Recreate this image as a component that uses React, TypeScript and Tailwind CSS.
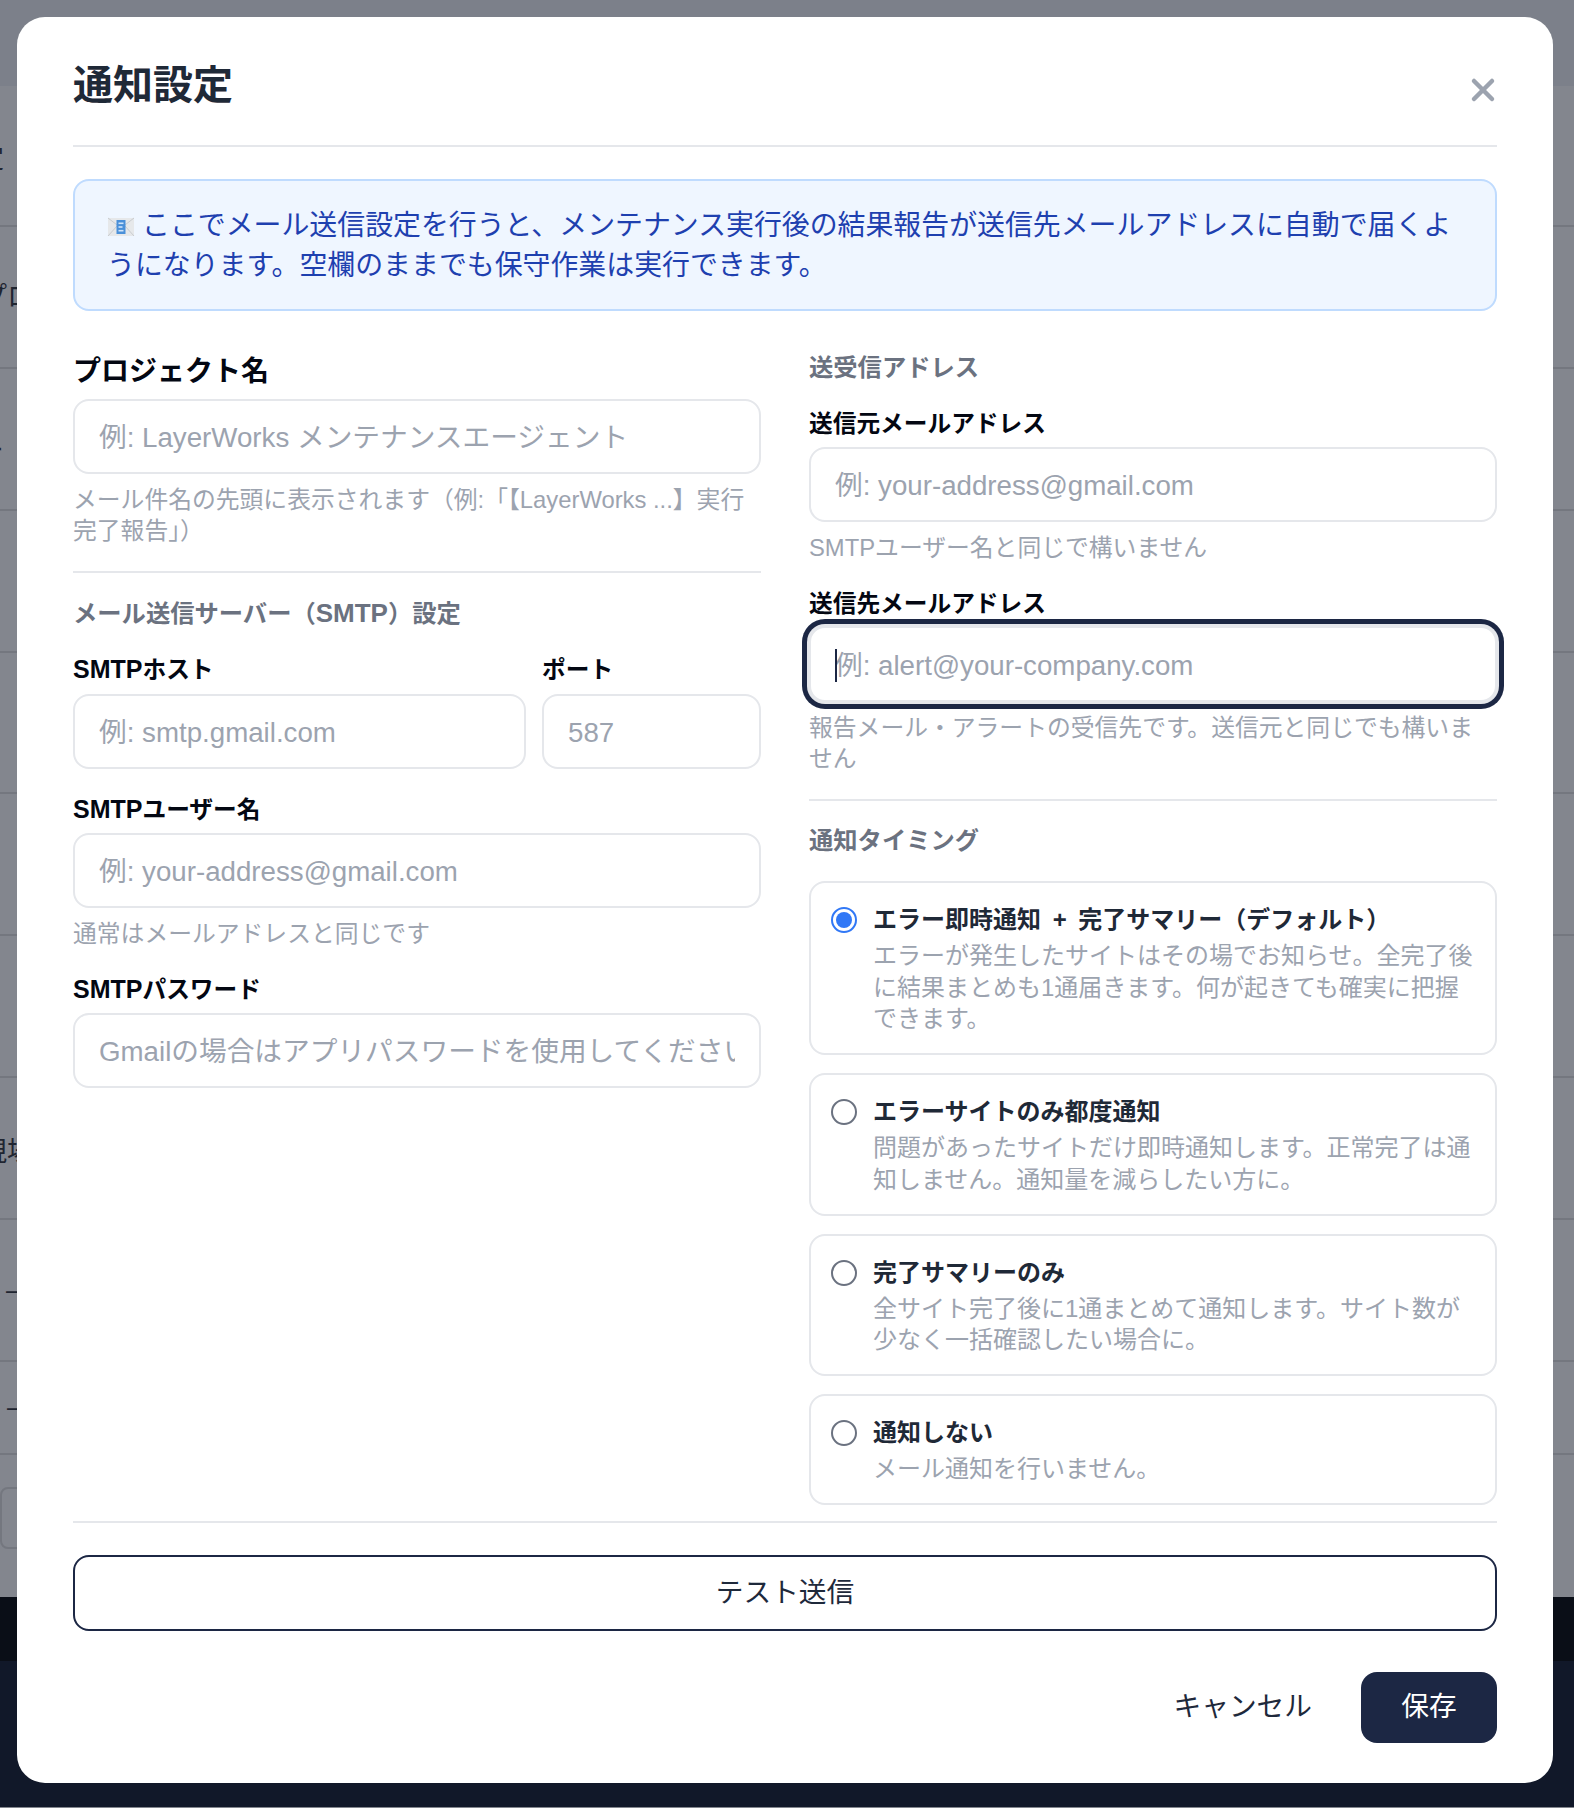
import { X } from 'lucide-react';

const rows = [
  { h: 'h-[141px]', text: '定', cls: '-ml-[23px] mt-[8px]' },
  { h: 'h-[142px]', text: 'プロジェクト', cls: '-ml-[20px]' },
  { h: 'h-[142px]', text: 'ニ', cls: '-ml-[23px] mt-[8px]' },
  { h: 'h-[142px]', text: '', cls: '' },
  { h: 'h-[141px]', text: '', cls: '' },
  { h: 'h-[142px]', text: '', cls: '' },
  { h: 'h-[142px]', text: '', cls: '' },
  { h: 'h-[142px]', text: '現場', cls: '-ml-[20px] mt-[8px]' },
  { h: 'h-[142px]', text: '—', cls: 'ml-[6px]' },
  { h: 'h-[93px]', text: '—', cls: 'ml-[7px]' },
];

const timings = [
  {
    title: 'エラー即時通知 + 完了サマリー（デフォルト）',
    desc: 'エラーが発生したサイトはその場でお知らせ。全完了後に結果まとめも1通届きます。何が起きても確実に把握できます。',
    checked: true,
  },
  {
    title: 'エラーサイトのみ都度通知',
    desc: '問題があったサイトだけ即時通知します。正常完了は通知しません。通知量を減らしたい方に。',
  },
  {
    title: '完了サマリーのみ',
    desc: '全サイト完了後に1通まとめて通知します。サイト数が少なく一括確認したい場合に。',
  },
  {
    title: '通知しない',
    desc: 'メール通知を行いません。',
  },
];

const inputCls =
  'block h-[75px] w-full rounded-[16px] border-2 border-[#e5e7eb] bg-white px-[24px] pt-[2px] text-[27.7px] text-[#111827] outline-none placeholder:text-[#9ca3af]';
const labelCls = 'block text-[23.7px] leading-[32px] font-bold text-[#030712]';
const hintCls = 'mt-[10px] text-[23.8px] leading-[31px] text-[#9ca3af]';
const headingCls = 'text-[24.3px] leading-[32px] font-bold text-[#6b7280]';

function MailIcon() {
  return (
    <svg viewBox="0 0 28 20" className="mr-[7px] inline-block h-[20px] w-[28px] align-[-2px]">
      <rect x="1" y="1" width="26" height="18" fill="#e6e8ea" />
      <path d="M1 1 L14 11 L27 1 M1 19 L10 9 M27 19 L18 9" fill="none" stroke="#c9ccd0" strokeWidth="1" />
      <rect x="9.5" y="3" width="9" height="14" fill="#4a90d9" />
      <rect x="11.5" y="5.5" width="5" height="1.6" fill="#cfe4fa" />
      <rect x="11.5" y="9.2" width="4" height="1.6" fill="#cfe4fa" />
      <rect x="11.5" y="12.9" width="5" height="1.6" fill="#cfe4fa" />
    </svg>
  );
}

export default function App() {
  return (
    <div
      className="relative h-[1808px] w-full overflow-hidden bg-[#83868e]"
      style={{ fontFamily: '"Liberation Sans", "Noto Sans CJK JP", sans-serif' }}
    >
      {/* Page behind the dialog */}
      <div className="h-[86px] bg-[#7c808a]" />
      {rows.map((row, i) => (
        <div
          key={i}
          className={`flex items-center border-b-2 border-[#74777f] text-[27px] whitespace-nowrap text-[#1f2531] ${row.h}`}
        >
          <span className={row.cls}>{row.text}</span>
        </div>
      ))}
      <div className="mt-[32px] h-[62px] w-[60px] rounded-l-lg border-2 border-[#74777f]" />
      <div className="mt-[48px] h-[64px] bg-[#0a0e17]" />
      <div className="h-[146px] bg-[#111829]" />

      {/* Dialog */}
      <div className="absolute top-[17px] left-[17px] h-[1766px] w-[1536px] rounded-[28px] bg-white px-[56px]">
        <div className="flex h-[130px] items-start justify-between border-b-2 border-[#e5e7eb] pt-[44px]">
          <h2 className="text-[40px] leading-[48px] font-bold text-[#1f2937]">通知設定</h2>
          <button className="-mr-[4px] mt-[11px] text-[#9ca3af]">
            <X size={36} strokeWidth={3} />
          </button>
        </div>

        <div className="mt-[32px] rounded-[16px] border-2 border-[#bfdbfe] bg-[#eff6ff] px-[32px] pt-[25px] pb-[23px] text-[27.9px] leading-[40px] text-[#1e40af]">
          <MailIcon />
          ここでメール送信設定を行うと、メンテナンス実行後の結果報告が送信先メールアドレスに自動で届くようになります。空欄のままでも保守作業は実行できます。
        </div>

        <div className="mt-[36px] grid grid-cols-2 gap-x-[48px]">
          {/* Left column */}
          <div>
            <label className="mt-[5px] mb-[7px] block text-[28px] leading-[40px] font-bold text-[#030712]">
              プロジェクト名
            </label>
            <input className={inputCls} placeholder="例: LayerWorks メンテナンスエージェント" />
            <p className={hintCls}>メール件名の先頭に表示されます（例:「【LayerWorks ...】実行完了報告」）</p>
            <div className="mt-[25px] h-[2px] bg-[#e5e7eb]" />
            <h3 className={`mt-[25px] ${headingCls}`}>
              メール送信サーバー（<span className="text-[26px] leading-none">SMTP</span>）設定
            </h3>

            <div className="mt-[24px] grid grid-cols-[453px_1fr] gap-x-[16px]">
              <div>
                <label className={`mb-[8px] ${labelCls}`}>
                  <span className="text-[25px] leading-none">SMTP</span>ホスト
                </label>
                <input className={inputCls} placeholder="例: smtp.gmail.com" />
              </div>
              <div>
                <label className={`mb-[8px] ${labelCls}`}>ポート</label>
                <input className={inputCls} placeholder="587" />
              </div>
            </div>

            <label className={`mt-[25px] mb-[7px] ${labelCls}`}>
              <span className="text-[25px] leading-none">SMTP</span>ユーザー名
            </label>
            <input className={inputCls} placeholder="例: your-address@gmail.com" />
            <p className={hintCls}>通常はメールアドレスと同じです</p>

            <label className={`mt-[25px] mb-[7px] ${labelCls}`}>
              <span className="text-[25px] leading-none">SMTP</span>パスワード
            </label>
            <input className={inputCls} placeholder="Gmailの場合はアプリパスワードを使用してください" />
          </div>

          {/* Right column */}
          <div>
            <h3 className={`mt-[5px] ${headingCls}`}>送受信アドレス</h3>
            <label className={`mt-[24px] mb-[7px] ${labelCls}`}>送信元メールアドレス</label>
            <input className={inputCls} placeholder="例: your-address@gmail.com" />
            <p className={hintCls}>SMTPユーザー名と同じで構いません</p>

            <label className={`mt-[25px] mb-[6px] ${labelCls}`}>送信先メールアドレス</label>
            <div className="relative">
              <input
                className="block h-[76px] w-full rounded-[16px] border-2 border-[#e5e7eb] bg-white px-[24px] pt-[3px] text-[27.7px] text-[#111827] shadow-[0_0_0_2px_#e5e7eb,0_0_0_7px_#1c2744] outline-none placeholder:text-[#9ca3af]"
                placeholder="例: alert@your-company.com"
              />
              <span className="absolute top-[23px] left-[26px] h-[33px] w-[2px] bg-[#1c2744]" />
            </div>
            <p className={`pr-[16px] ${hintCls}`}>報告メール・アラートの受信先です。送信元と同じでも構いません</p>

            <div className="mt-[25px] h-[2px] bg-[#e5e7eb]" />
            <h3 className={`mt-[24px] ${headingCls}`}>通知タイミング</h3>

            <div className="mt-[24px] flex flex-col gap-[18px]">
              {timings.map((t) => (
                <label
                  key={t.title}
                  className="flex gap-[16px] rounded-[16px] border-2 border-[#e5e7eb] bg-white pt-[21px] pr-[19px] pb-[18px] pl-[20px]"
                >
                  {t.checked ? (
                    <span className="mt-[3px] flex h-[26px] w-[26px] shrink-0 items-center justify-center rounded-full border-2 border-[#3178f6] bg-white">
                      <span className="h-[16px] w-[16px] rounded-full bg-[#3178f6]" />
                    </span>
                  ) : (
                    <span className="mt-[3px] h-[26px] w-[26px] shrink-0 rounded-full border-2 border-[#6b7280] bg-white" />
                  )}
                  <span className="block min-w-0">
                    <span className="block text-[24px] leading-[32px] font-bold text-[#1f2937] [word-spacing:5px]">
                      {t.title}
                    </span>
                    <span className="mt-[4px] block text-[24px] leading-[31.7px] text-[#9ca3af]">{t.desc}</span>
                  </span>
                </label>
              ))}
            </div>
          </div>
        </div>

        <div className="mt-[16px] h-[2px] bg-[#e5e7eb]" />
        <button className="mt-[32px] block h-[76px] w-full rounded-[16px] border-2 border-[#1c2744] bg-white text-[27.7px] text-[#1e293b]">
          テスト送信
        </button>
        <div className="mt-[41px] flex items-center justify-end gap-[49px]">
          <button className="text-[27.7px] text-[#1e293b]">キャンセル</button>
          <button className="h-[71px] w-[136px] rounded-[16px] bg-[#1c2744] text-[27.7px] text-white">保存</button>
        </div>
      </div>
    </div>
  );
}
